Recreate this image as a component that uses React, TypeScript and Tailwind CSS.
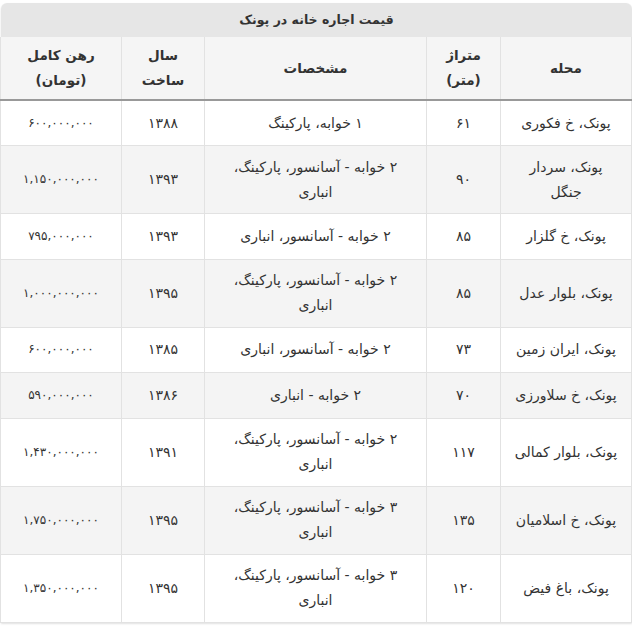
import React from "react";

type Row = { area: React.ReactNode; size: string; spec: React.ReactNode; year: string; price: string; tall?: boolean };

const rows: Row[] = [
  { area: "پونک، خ فکوری", size: "۶۱", spec: "۱ خوابه، پارکینگ", year: "۱۳۸۸", price: "۶۰۰,۰۰۰,۰۰۰" },
  { area: <>پونک، سردار<br />جنگل</>, size: "۹۰", spec: <>۲ خوابه - آسانسور، پارکینگ،<br />انباری</>, year: "۱۳۹۳", price: "۱,۱۵۰,۰۰۰,۰۰۰", tall: true },
  { area: "پونک، خ گلزار", size: "۸۵", spec: "۲ خوابه - آسانسور، انباری", year: "۱۳۹۳", price: "۷۹۵,۰۰۰,۰۰۰" },
  { area: "پونک، بلوار عدل", size: "۸۵", spec: <>۲ خوابه - آسانسور، پارکینگ،<br />انباری</>, year: "۱۳۹۵", price: "۱,۰۰۰,۰۰۰,۰۰۰", tall: true },
  { area: "پونک، ایران زمین", size: "۷۳", spec: "۲ خوابه - آسانسور، انباری", year: "۱۳۸۵", price: "۶۰۰,۰۰۰,۰۰۰" },
  { area: "پونک، خ سلاورزی", size: "۷۰", spec: "۲ خوابه - انباری", year: "۱۳۸۶", price: "۵۹۰,۰۰۰,۰۰۰" },
  { area: "پونک، بلوار کمالی", size: "۱۱۷", spec: <>۲ خوابه - آسانسور، پارکینگ،<br />انباری</>, year: "۱۳۹۱", price: "۱,۴۳۰,۰۰۰,۰۰۰", tall: true },
  { area: "پونک، خ اسلامیان", size: "۱۳۵", spec: <>۳ خوابه - آسانسور، پارکینگ،<br />انباری</>, year: "۱۳۹۵", price: "۱,۷۵۰,۰۰۰,۰۰۰", tall: true },
  { area: "پونک، باغ فیض", size: "۱۲۰", spec: <>۳ خوابه - آسانسور، پارکینگ،<br />انباری</>, year: "۱۳۹۵", price: "۱,۳۵۰,۰۰۰,۰۰۰", tall: true },
];

export default function App() {
  const td = "border border-[#e2e2e2] text-center align-middle px-2 py-0";
  return (
    <div dir="rtl" className="bg-white w-[632px] h-[627px] pt-[3px] text-[#333]" style={{ fontFamily: '"DejaVu Sans", sans-serif' }}>
      <div className="w-[631px] shadow-[0_1px_2px_rgba(0,0,0,0.12)] rounded-t-[6px]">
        <div className="h-[34px] bg-[#e6e6e6] rounded-t-[6px] flex items-center justify-center text-[12.5px] font-bold text-[#333]">
          قیمت اجاره خانه در پونک
        </div>
        <table className="w-[631px] table-fixed border-collapse text-[14px] leading-[25px]">
          <colgroup>
            <col className="w-[131px]" />
            <col className="w-[74px]" />
            <col className="w-[222px]" />
            <col className="w-[83px]" />
            <col className="w-[121px]" />
          </colgroup>
          <thead>
            <tr className="h-[63px] bg-[#f5f5f5] font-bold text-[#333] text-[13.5px]">
              <th className="border-x border-[#e2e2e2] border-b-2 border-b-[#999] font-bold">محله</th>
              <th className="border-x border-[#e2e2e2] border-b-2 border-b-[#999] font-bold">متراژ<br />(متر)</th>
              <th className="border-x border-[#e2e2e2] border-b-2 border-b-[#999] font-bold">مشخصات</th>
              <th className="border-x border-[#e2e2e2] border-b-2 border-b-[#999] font-bold">سال<br />ساخت</th>
              <th className="border-x border-[#e2e2e2] border-b-2 border-b-[#999] font-bold">رهن کامل<br />(تومان)</th>
            </tr>
          </thead>
          <tbody>
            {rows.map((r, i) => (
              <tr key={i} className={`${r.tall ? "h-[68px]" : "h-[45.5px]"} ${i % 2 === 1 ? "bg-[#f4f4f4]" : "bg-white"}`}>
                <td className={td}>{r.area}</td>
                <td className={td}>{r.size}</td>
                <td className={td}>{r.spec}</td>
                <td className={td}>{r.year}</td>
                <td className={`${td} text-[12px]`}>{r.price}</td>
              </tr>
            ))}
          </tbody>
        </table>
      </div>
    </div>
  );
}
